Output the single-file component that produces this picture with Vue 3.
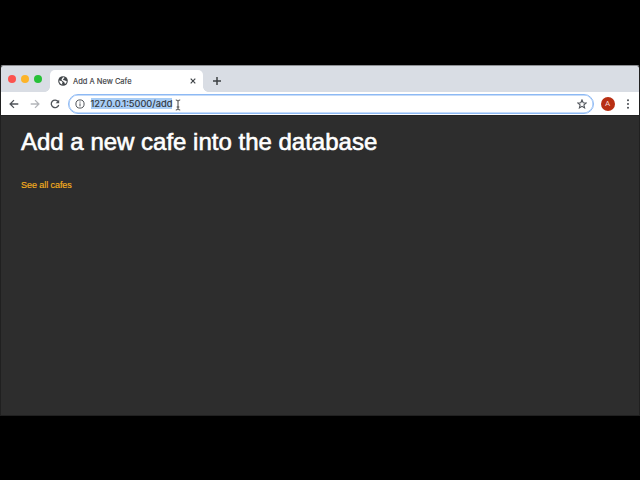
<script setup>
import { ref } from 'vue'

const tabTitle = ref('Add A New Cafe')
const address = ref('127.0.0.1:5000/add')
const lights = ['red', 'yellow', 'green']
</script>

<template>
  <div class="screen">
    <div class="window">
      <header class="tabstrip">
        <div class="lights">
          <span v-for="c in lights" :key="c" class="light" :class="c"></span>
        </div>
        <div class="tab">
          <svg class="globe" viewBox="0 0 10 10">
            <circle cx="5" cy="5" r="4.800" fill="#414549" />
            <path d="M1.200 4.600 3.400 5l1.200 1.200-.5 1 .2 1.500C2.600 8.300 1.200 6.800 1.200 4.600zM5 1.200l1.200.1.100.9L5.300 3 5 4.100l2.200.300.900.9.6-.5c.1 1.500-.6 2.600-1.800 3.300L6.500 6.500 5 5.300 3.900 4.400 3.500 3.300z" fill="#fff" />
          </svg>
          <span class="title">{{ tabTitle }}</span>
          <svg class="close" viewBox="0 0 6 6"><path d="M.7.7l4.600 4.600M5.300.7.7 5.300" /></svg>
        </div>
        <svg class="plus" viewBox="0 0 8 8"><path d="M4 0v8M0 4h8" /></svg>
      </header>

      <nav class="toolbar">
        <svg class="nav" viewBox="0 0 10 10"><path d="M9.300 5H1.200M5 1.100 1.100 5 5 8.900" /></svg>
        <svg class="nav forward" viewBox="0 0 10 10"><path d="M.7 5h8.100M5 1.100 8.900 5 5 8.900" /></svg>
        <svg class="nav" viewBox="0 0 10 10">
          <path d="M8.200 2.700A3.800 3.800 0 1 0 8.700 6" />
          <path d="M9.200.7v3.600H5.600z" class="solid" />
        </svg>
        <div class="omnibox">
          <svg class="info" viewBox="0 0 10 10">
            <circle cx="5" cy="5" r="4.100" />
            <path d="M5 4.400v3M5 2.500v1.100" />
          </svg>
          <span class="url">{{ address }}</span>
          <svg class="cursor" viewBox="0 0 6 12">
            <path d="M.8 1Q3 1 3 2.400V9.600Q3 11 .8 11M5.200 1Q3 1 3 2.400M3 9.600Q3 11 5.200 11M1.700 8h2.600" />
          </svg>
          <svg class="star" viewBox="0 0 10 10">
            <path d="M5 .9 6.200 3.700l3 .25L6.900 5.900l.7 3L5 7.300 2.400 8.900l.7-3L.8 3.950l3-.25z" />
          </svg>
        </div>
        <span class="avatar">A</span>
        <svg class="menu" viewBox="0 0 4 10">
          <circle cx="2" cy="1.300" r="1.050" /><circle cx="2" cy="5" r="1.050" /><circle cx="2" cy="8.700" r="1.050" />
        </svg>
      </nav>

      <main class="page">
        <h1>Add a new cafe into the database</h1>
        <a class="link">See all cafes</a>
      </main>
    </div>
  </div>
</template>

<style>
body {
  margin: 0;
  background: #000;
}
</style>

<style scoped>
.screen {
  box-sizing: border-box;
  width: 640px;
  height: 480px;
  padding-top: 65px;
  background: #000;
  overflow: hidden;
  font-family: "Liberation Sans", Arial, sans-serif;
}
.window {
  display: flex;
  flex-direction: column;
  box-sizing: border-box;
  height: 351px;
  border: 1px solid #202020;
  border-top-color: #8c8e92;
  border-radius: 3px 3px 0 0;
  overflow: hidden;
}
svg {
  display: block;
  flex: none;
  fill: none;
}
.tabstrip {
  display: flex;
  flex: none;
  height: 26px;
  background: #d9dde4;
}
.lights {
  display: flex;
  gap: 5px;
  padding: 9px 0 0 7px;
  width: 41px;
}
.light {
  width: 8px;
  height: 8px;
  border-radius: 50%;
}
.red { background: #fc524e; }
.yellow { background: #fdb429; }
.green { background: #27c138; }
.tab {
  position: relative;
  display: flex;
  align-items: center;
  box-sizing: border-box;
  width: 153px;
  height: 22px;
  margin-top: 4px;
  padding: 0 7px 0 7.500px;
  margin-left: 1px;
  border-radius: 5px 5px 0 0;
  background: #fff;
}
.tab::before,
.tab::after {
  content: "";
  position: absolute;
  bottom: 0;
  width: 5px;
  height: 5px;
}
.tab::before {
  left: -5px;
  background: radial-gradient(circle at 0 0, transparent 4.500px, #fff 5px);
}
.tab::after {
  right: -5px;
  background: radial-gradient(circle at 100% 0, transparent 4.500px, #fff 5px);
}
.globe {
  width: 10px;
  height: 10px;
}
.title {
  flex: 1;
  margin-left: 5.500px;
  padding-top: 1px;
  font: 7.500px/12px Inter, sans-serif;
  color: #3c4043;
  -webkit-text-stroke: 0.150px #3c4043;
}
.close {
  width: 6px;
  height: 6px;
  stroke: #414549;
  stroke-width: 1.200;
}
.plus {
  width: 8px;
  height: 8px;
  margin: 11px 0 0 10px;
  stroke: #3c4043;
  stroke-width: 1.500;
}
.toolbar {
  display: flex;
  align-items: center;
  flex: none;
  height: 23px;
  padding-left: 8px;
  background: #fff;
}
.nav {
  width: 10px;
  height: 10px;
  margin-right: 10.500px;
  stroke: #50545a;
  stroke-width: 1.300;
}
.forward {
  stroke: #b4b6ba;
}
.solid {
  fill: #50545a;
  stroke: none;
}
.omnibox {
  display: flex;
  align-items: center;
  box-sizing: border-box;
  width: 526px;
  height: 20px;
  margin-left: -2.500px;
  padding: 0 6px;
  border: 1px solid #8db9f4;
  border-radius: 10px;
  background: #fff;
  box-shadow: inset 0 0 0 0.500px #8db9f4;
}
.info {
  width: 10px;
  height: 10px;
  stroke: #50545a;
  stroke-width: 1;
}
.url {
  margin-left: 5.500px;
  background: #a8cdf6;
  color: #30353a;
  font: 9.400px/11px Inter, sans-serif;
  -webkit-text-stroke: 0.150px #30353a;
  white-space: nowrap;
}
.cursor {
  width: 6px;
  height: 12px;
  margin: 2px 0 0 3px;
  stroke: #444;
  stroke-width: 1;
}
.star {
  width: 10px;
  height: 10px;
  margin-left: auto;
  stroke: #50545a;
  stroke-width: 1.100;
}
.avatar {
  width: 14px;
  height: 14px;
  margin-left: 6.500px;
  border-radius: 50%;
  background: #b82f13;
  color: #f5d9d3;
  font: 8px/14px Roboto, sans-serif;
  text-align: center;
}
.menu {
  width: 4px;
  height: 10px;
  margin-left: 11.500px;
  fill: #50545a;
}
.page {
  flex: 1;
  padding: 12px 20px 0;
  background: #2d2d2d;
  border-top: 1px solid #242424;
}
h1 {
  margin: 0;
  color: #fff;
  font-size: 24px;
  font-weight: 400;
  line-height: 28px;
  -webkit-text-stroke: 0.600px #fff;
  white-space: nowrap;
}
.link {
  display: block;
  margin-top: 23px;
  color: #f6b01e;
  font-size: 9px;
  line-height: 12px;
  letter-spacing: -0.060px;
  -webkit-text-stroke: 0.150px #f6b01e;
}
</style>
